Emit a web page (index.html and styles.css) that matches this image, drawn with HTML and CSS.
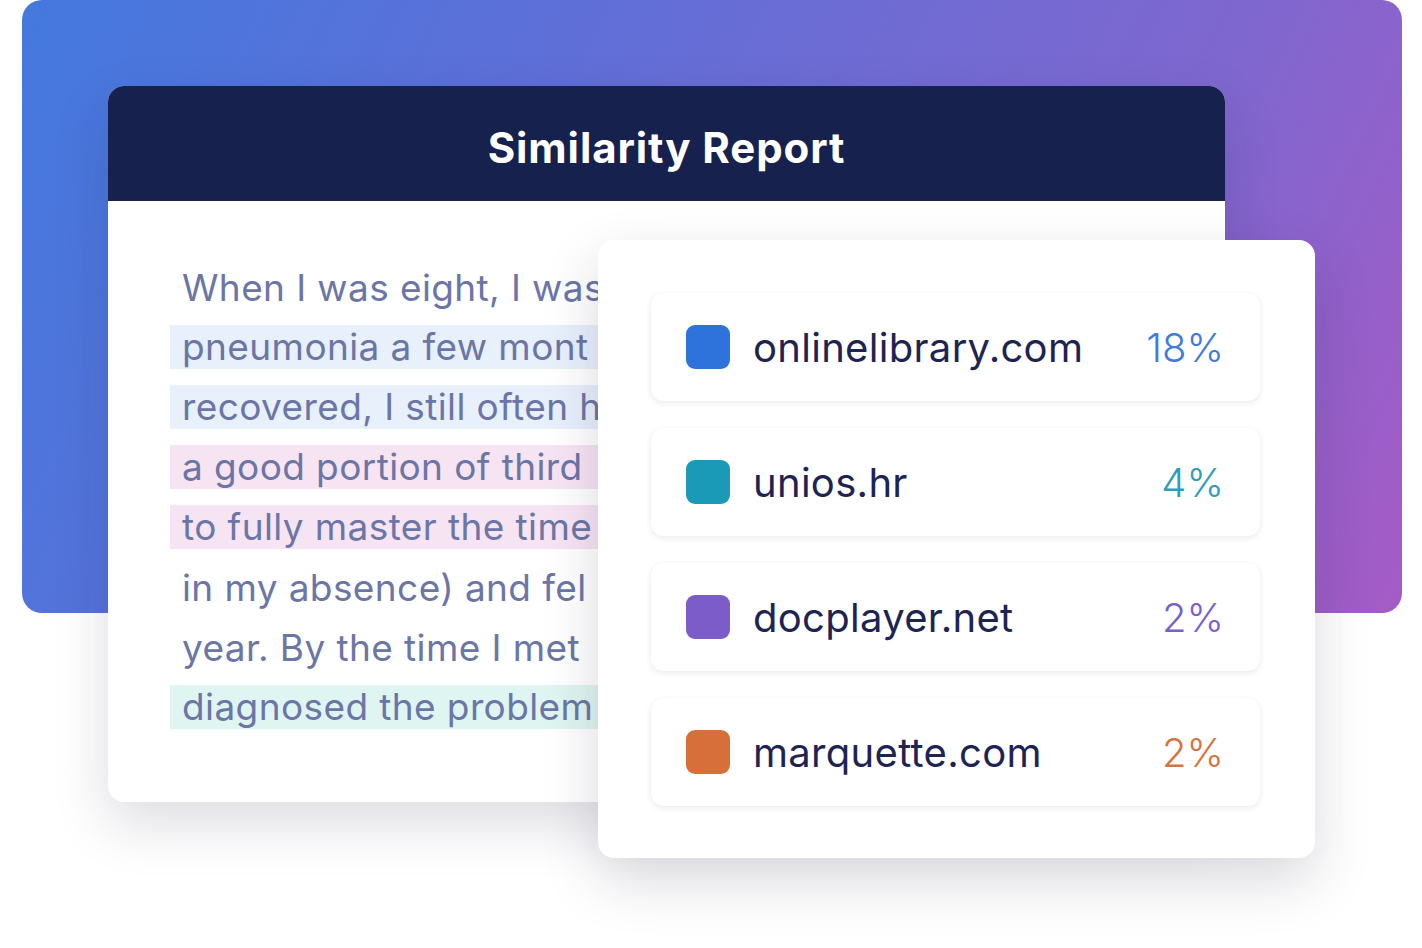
FILE: index.html
```html
<!DOCTYPE html>
<html lang="en">
<head>
<meta charset="utf-8">
<title>Similarity Report</title>
<link rel="stylesheet" href="styles.css">
</head>
<body>
<div class="stage">
  <div class="backdrop"></div>

  <section class="report">
    <header class="report-head">
      <h1 class="report-title">Similarity Report</h1>
    </header>
    <div class="report-body">
      <div class="line">When I was eight, I was</div>
      <div class="line"><span class="hl hl-blue">pneumonia a few mont</span></div>
      <div class="line"><span class="hl hl-blue">recovered, I still often h</span></div>
      <div class="line"><span class="hl hl-pink">a good portion of third</span></div>
      <div class="line"><span class="hl hl-pink">to fully master the time</span></div>
      <div class="line">in my absence) and fel</div>
      <div class="line">year. By the time I met</div>
      <div class="line"><span class="hl hl-mint">diagnosed the problem</span></div>
    </div>
  </section>

  <section class="sources">
    <div class="source">
      <span class="swatch swatch-blue"></span>
      <span class="domain">onlinelibrary.com</span>
      <span class="pct pct-blue">18%</span>
    </div>
    <div class="source">
      <span class="swatch swatch-teal"></span>
      <span class="domain">unios.hr</span>
      <span class="pct pct-teal">4%</span>
    </div>
    <div class="source">
      <span class="swatch swatch-purple"></span>
      <span class="domain">docplayer.net</span>
      <span class="pct pct-purple">2%</span>
    </div>
    <div class="source">
      <span class="swatch swatch-orange"></span>
      <span class="domain">marquette.com</span>
      <span class="pct pct-orange">2%</span>
    </div>
  </section>
</div>
</body>
</html>
```

FILE: styles.css
```css
* { box-sizing: border-box; }

html, body {
  margin: 0;
  padding: 0;
  background: #ffffff;
}

body {
  font-family: Inter, "Noto Sans", "Liberation Sans", sans-serif;
}

.stage {
  position: relative;
  width: 1422px;
  height: 948px;
  overflow: hidden;
}

.backdrop {
  margin-left: 22px;
  width: 1380px;
  height: 613px;
  border-radius: 20px;
  background: linear-gradient(115deg, #4479de 0%, #5c70d9 30%, #6d6cd4 50%, #7f67cf 75%, #a65bc6 100%);
}

.report {
  position: absolute;
  left: 108px;
  top: 86px;
  width: 1117px;
  height: 716px;
  border-radius: 16px;
  background: #ffffff;
  overflow: hidden;
  box-shadow: 0 22px 55px rgba(30, 30, 60, 0.15);
}

.report-head {
  height: 115px;
  background: #17214e;
  display: flex;
  align-items: center;
  justify-content: center;
}

.report-title {
  margin: 0;
  color: #ffffff;
  font-size: 42px;
  font-weight: 700;
  letter-spacing: 0.9px;
  padding-top: 8px;
}

.report-body {
  width: 490px;
  overflow: hidden;
  padding: 56px 0 0 74px;
}

.line {
  height: 60px;
  display: flex;
  align-items: center;
  white-space: nowrap;
  font-size: 37px;
  letter-spacing: 0.4px;
  color: #6b76a6;
}

.hl {
  flex: 1;
  height: 44px;
  line-height: 44px;
  padding: 0 0 0 12px;
  margin-left: -12px;
}

.hl-blue { background: #e7f0fb; }
.hl-pink { background: #f7e4f3; }
.hl-mint { background: #dff5f1; }

.sources {
  position: absolute;
  left: 598px;
  top: 240px;
  width: 717px;
  height: 618px;
  border-radius: 16px;
  background: #ffffff;
  padding: 53px 55px 0 53px;
  display: flex;
  flex-direction: column;
  gap: 27px;
  box-shadow: 0 22px 55px rgba(30, 30, 60, 0.17);
}

.source {
  height: 108px;
  border-radius: 12px;
  background: #ffffff;
  display: flex;
  align-items: center;
  padding: 0 36px 0 35px;
  box-shadow: 0 2px 6px rgba(30, 30, 60, 0.09), 0 0 1px rgba(30, 30, 60, 0.06);
}

.swatch {
  width: 44px;
  height: 44px;
  border-radius: 9px;
  flex: none;
  margin-right: 23px;
}

.swatch-blue { background: #2e73db; }
.swatch-teal { background: #1a9ab6; }
.swatch-purple { background: #7b5cc9; }
.swatch-orange { background: #d66f39; }

.domain {
  flex: 1;
  font-size: 40px;
  letter-spacing: 0.3px;
  color: #1e2452;
}

.pct {
  font-size: 40px;
  font-weight: 300;
}

.pct-blue { color: #3f7bd8; }
.pct-teal { color: #2c9dba; }
.pct-purple { color: #7a5fcf; }
.pct-orange { color: #d7733f; }
```
